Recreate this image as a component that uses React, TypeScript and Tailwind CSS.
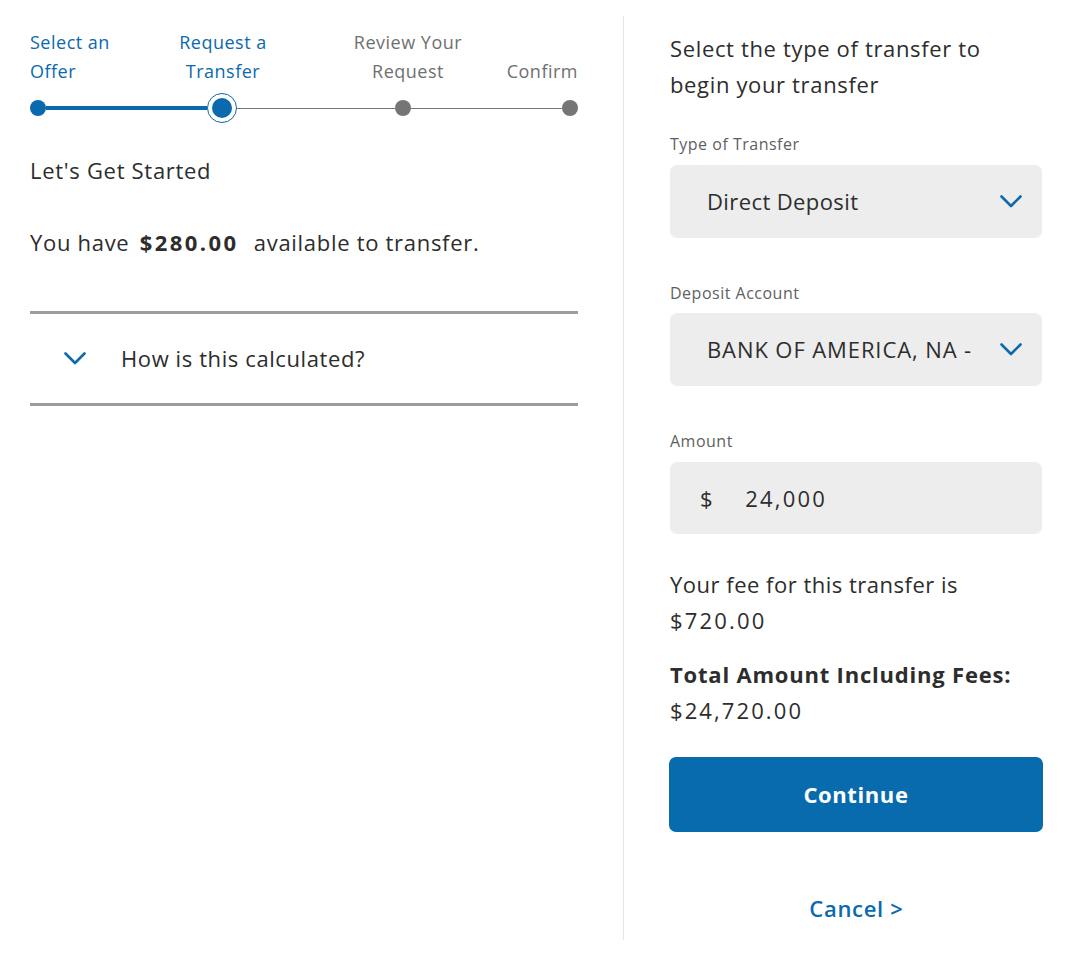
import React from "react";

const BLUE = "#0a6aad";

function Chevron({ className }: { className?: string }) {
  return (
    <svg className={className} width="22" height="13" viewBox="0 0 22 13" fill="none">
      <polyline points="1.5,1.5 11,11 20.5,1.5" stroke={BLUE} strokeWidth="2.6" strokeLinecap="round" strokeLinejoin="round" />
    </svg>
  );
}

export default function App() {
  return (
    <div
      className="flex h-[969px] w-full bg-white tracking-[0.6px] text-[#2d2d2d]"
      style={{ fontFamily: '"Open Sans", "Noto Sans", sans-serif' }}
    >
      {/* Left column */}
      <div className="ml-[30px] w-[548px] pt-[28px]">
        {/* Stepper labels */}
        <div className="flex text-[18px] leading-[29px] tracking-[0.5px]">
          <div className="w-[130px] text-left text-[#0a6aad]">
            Select an
            <br />
            Offer
          </div>
          <div className="w-[126px] text-center text-[#0a6aad]">
            Request a
            <br />
            Transfer
          </div>
          <div className="ml-[59px] w-[126px] text-center text-[#707070]">
            Review Your
            <br />
            Request
          </div>
          <div className="flex-1 pt-[29px] text-right text-[#707070]">Confirm</div>
        </div>
        {/* Stepper track */}
        <div className="mt-[7px] flex h-[30px] items-center">
          <div className="h-4 w-4 shrink-0 rounded-full bg-[#0a6aad]" />
          <div className="h-[4px] w-[161px] shrink-0 bg-[#0a6aad]" />
          <div className="flex h-[30px] w-[30px] shrink-0 items-center justify-center rounded-full border border-[#0a6aad] bg-white">
            <div className="h-[20px] w-[20px] rounded-full bg-[#0a6aad]" />
          </div>
          <div className="h-px w-[158px] shrink-0 bg-[#777]" />
          <div className="h-4 w-4 shrink-0 rounded-full bg-[#757575]" />
          <div className="h-px w-[151px] shrink-0 bg-[#777]" />
          <div className="h-4 w-4 shrink-0 rounded-full bg-[#757575]" />
        </div>

        <div className="mt-[33px] text-[22px] leading-[28px] tracking-[0.7px]">Let's Get Started</div>
        <div className="mt-[44px] text-[22px] leading-[28px] tracking-[0.7px]">
          You have{" "}
          <span className="ml-[4px] mr-[9px] font-bold tracking-[2.4px]">$280.00</span> available to transfer.
        </div>

        <div className="mt-[55px] border-t-[3px] border-[#9d9d9d]" />
        <div className="flex h-[89px] items-center">
          <Chevron className="ml-[34px]" />
          <span className="ml-[35px] text-[22px] tracking-[0.6px]">How is this calculated?</span>
        </div>
        <div className="border-t-[3px] border-[#9d9d9d]" />
      </div>

      {/* Divider */}
      <div className="ml-[45px] mt-[16px] h-[924px] w-px bg-[#e6e6e6]" />

      {/* Right column */}
      <div className="ml-[46px] w-[373px] pt-[30px]">
        <div className="text-[22px] leading-[36px] tracking-[0.65px]">
          Select the type of transfer to
          <br />
          begin your transfer
        </div>

        <div className="mt-[30px] text-[16px] leading-[24px] tracking-[0.5px] text-[#5f5f5f]">Type of Transfer</div>
        <div className="mt-[9px] flex h-[73px] w-[372px] items-center justify-between rounded-[7px] bg-[#ededed] pl-[37px] pr-[20px]">
          <span className="text-[22px] tracking-[0.4px]">Direct Deposit</span>
          <Chevron />
        </div>

        <div className="mt-[43px] text-[16px] leading-[24px] tracking-[0.5px] text-[#5f5f5f]">Deposit Account</div>
        <div className="mt-[8px] flex h-[73px] w-[372px] items-center justify-between rounded-[7px] bg-[#ededed] pl-[37px] pr-[20px]">
          <span className="text-[22px] tracking-[0.9px]">BANK OF AMERICA, NA -</span>
          <Chevron />
        </div>

        <div className="mt-[43px] text-[16px] leading-[24px] tracking-[0.5px] text-[#5f5f5f]">Amount</div>
        <div className="mt-[9px] flex h-[72px] w-[372px] items-center rounded-[7px] bg-[#ededed] pl-[30px] text-[22px]">
          <span>$</span>
          <span className="ml-[32px] tracking-[2.2px]">24,000</span>
        </div>

        <div className="mt-[32px] text-[22px] leading-[36px] tracking-[0.5px]">
          Your fee for this transfer is
          <br />
          <span className="tracking-[2.2px]">$720.00</span>
        </div>

        <div className="mt-[18px] text-[22px] leading-[36px]">
          <span className="font-bold tracking-[0.8px]">Total Amount Including Fees:</span>
          <br />
          <span className="tracking-[2.1px]">$24,720.00</span>
        </div>

        <button className="mt-[29px] flex h-[75px] w-[374px] -translate-x-px items-center justify-center rounded-[7px] bg-[#076bad] text-[22px] font-bold tracking-[0.6px] text-white">
          Continue
        </button>

        <div className="mt-[61px] text-center text-[22px] font-semibold leading-[30px] tracking-[0.7px] text-[#0a6aad]">
          Cancel &gt;
        </div>
      </div>
    </div>
  );
}
